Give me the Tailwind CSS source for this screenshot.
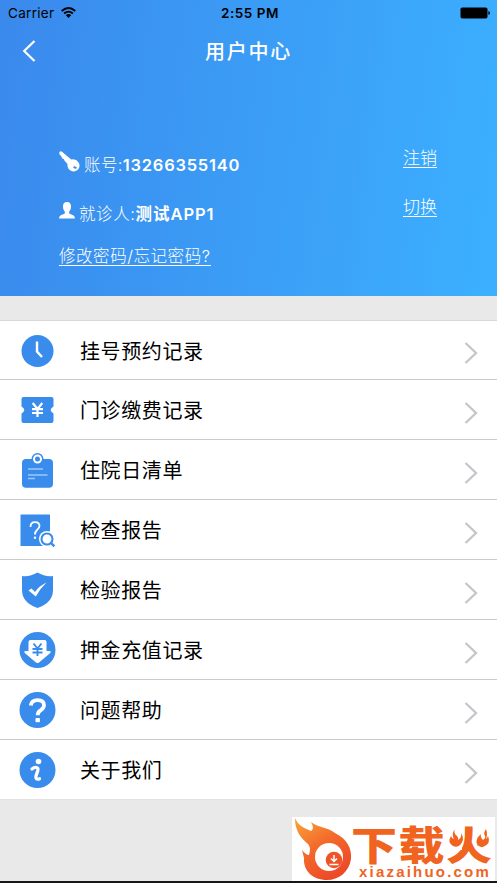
<!DOCTYPE html>
<html lang="zh-CN">
<head>
<meta charset="utf-8">
<meta name="viewport" content="width=device-width, initial-scale=1">
<title>用户中心</title>
<script src="https://cdn.jsdelivr.net/npm/@tailwindcss/browser@4"></script>
</head>
<body class="relative flex h-[883px] w-[497px] flex-col overflow-hidden bg-[#e9e9e9] font-['Inter','Noto_Sans_CJK_SC',sans-serif]">
<header class="h-[296px] shrink-0 bg-linear-[97deg] from-[#3a89ec] to-[#3cb0ff] text-white">
  <div class="grid h-[26px] grid-cols-3 items-center pr-[7px] pl-2 text-[13.5px] text-black">
    <div class="flex items-center gap-[6px]"><span class="w-[47px] tracking-[.3px] whitespace-nowrap">Carrier</span>
      <svg class="-mt-0.5 h-[11px] w-[15px]" viewBox="0 0 15 11" fill="none" stroke="#000" stroke-width="1.8"><path d="M.7 4Q7.5-2 14.3 4M3.1 6.5Q7.5 2.7 11.9 6.5"/><path d="M4.8 8.2Q7.5 6 10.2 8.2L7.5 11Z" fill="#000" stroke="none"/></svg>
    </div>
    <div class="pl-[2px] text-center font-semibold tracking-[.500px] whitespace-nowrap">2:55 PM</div>
    <div class="flex justify-end"><svg class="h-3 w-[30px]" viewBox="0 0 30 12"><rect x=".5" y=".5" width="27" height="11" rx="1.8"/><path d="M28.4 4Q30 4.5 30 6T28.4 8Z"/></svg></div>
  </div>
  <div class="grid h-[48px] grid-cols-[60px_1fr_60px] items-center">
    <svg class="mt-0.5 ml-[22px] h-[24px] w-[14px]" viewBox="0 0 14 24" fill="none" stroke="#fff" stroke-width="2.2"><path d="M12.5 2 2.2 12l10.300 10"/></svg>
    <h1 class="pt-[3px] text-center text-[20px] leading-none font-medium tracking-[1.800px]">用户中心</h1>
  </div>
  <div class="flex justify-between pt-[66px] pr-[60px] pl-[59px] text-[16.500px]">
    <div class="flex flex-col items-start whitespace-nowrap">
      <div class="flex h-[50px] items-center">
        <svg class="mr-1 -mt-2 h-[21px] w-[21px]" viewBox="0 0 21 21"><path d="M1 .5Q2-.2 3 .7L12.300 8.500Q17 7.500 19.400 11.200 22 15.500 18.800 18.700 15.500 21.800 11.500 19.600 8 17.500 8.500 13L5.400 9.500 4.700 7.900 3 7.300 2.600 5.700.5 3.300Q-.2 1.500 1 .5Z" fill="#fff"/><ellipse cx="16" cy="16.500" rx="1.800" ry="1.100" fill="#3b91ef" transform="rotate(15 16 16.500)"/></svg>
        <span class="font-light tracking-[.4px]">账号:</span><span class="font-semibold tracking-[.75px]">13266355140</span>
      </div>
      <div class="flex h-[48px] items-center">
        <svg class="mr-1 -mt-2 h-[17px] w-[16px]" viewBox="0 0 16 17" fill="#fff"><path d="M8 0C11 0 12.300 2 12 5.200 11.900 7 11 8.500 10.200 9.500V11.600L14.600 13.400Q15.900 14.200 16 16.400H0Q.1 14.200 1.400 13.400L5.800 11.600V9.500C5 8.500 4.100 7 4 5.200 3.700 2 5 0 8 0Z"/></svg>
        <span class="font-light tracking-[.6px]">就诊人:</span><span class="font-semibold tracking-[.95px]">测试APP1</span>
      </div>
      <a class="flex h-[38px] items-center font-light"><span class="border-b border-white leading-[17px] tracking-[.55px]">修改密码/忘记密码?</span></a>
    </div>
    <div class="flex flex-col font-light">
      <a class="flex h-[38px] items-center"><span class="border-b border-white text-[17px] leading-[17px]">注销</span></a>
      <a class="mt-[11px] flex h-[38px] items-center"><span class="border-b border-white text-[17px] leading-[17px]">切换</span></a>
    </div>
  </div>
</header>
<main class="mt-6 shrink-0 border-t border-[#d7d7d7] text-[20px] tracking-[.6px] text-black">
  <div class="flex h-[59px] items-center border-b border-[#cacaca] bg-white px-[19px]">
    <svg class="mt-px h-9 w-9" viewBox="0 0 36 36"><circle cx="18.500" cy="18" r="16" fill="#398cec"/><path d="M18 8.500V18.500L23 24" fill="none" stroke="#fff" stroke-width="2.400"/></svg>
    <span class="ml-[25px] flex-1 pt-[3px]">挂号预约记录</span>
    <svg class="mt-1.5 h-[22px] w-[14px]" viewBox="0 0 14 22" fill="none" stroke="#c5c5ca" stroke-width="2.300"><path d="M1.500 1 12 11 1.500 21"/></svg>
  </div>
  <div class="flex h-[60px] items-center border-b border-[#cacaca] bg-white px-[19px]">
    <svg class="h-9 w-9" viewBox="0 0 36 36"><path d="M4.500 5H32.500Q34.500 5 34.500 7V14.500Q28.800 18 34.500 21.500V29Q34.500 31 32.500 31H4.500Q2.500 31 2.500 29V21.500Q8.200 18 2.500 14.500V7Q2.500 5 4.500 5Z" fill="#398cec"/><path d="M13.700 11 18.500 17l4.800-6M18.500 17v8M13 17.200h11M13 21h11" fill="none" stroke="#fff" stroke-width="2.200"/></svg>
    <span class="ml-[25px] flex-1 pt-[2px]">门诊缴费记录</span>
    <svg class="mt-1.5 h-[22px] w-[14px]" viewBox="0 0 14 22" fill="none" stroke="#c5c5ca" stroke-width="2.300"><path d="M1.500 1 12 11 1.500 21"/></svg>
  </div>
  <div class="flex h-[60px] items-center border-b border-[#cacaca] bg-white px-[19px]">
    <svg class="h-9 w-9 overflow-visible" viewBox="0 0 36 36"><rect x="3" y="7" width="31" height="28.700" rx="4" fill="#398cec"/><circle cx="18.500" cy="7" r="6" fill="#398cec"/><circle cx="18.500" cy="7" r="3.500" fill="#398cec" stroke="#fff" stroke-width="2"/><path d="M9 17h15M9 23h19.500M9 26.500h7" stroke="#9dc7f7" stroke-width="1.300"/></svg>
    <span class="ml-[25px] flex-1 pt-[2px]">住院日清单</span>
    <svg class="mt-1.5 h-[22px] w-[14px]" viewBox="0 0 14 22" fill="none" stroke="#c5c5ca" stroke-width="2.300"><path d="M1.500 1 12 11 1.500 21"/></svg>
  </div>
  <div class="flex h-[60px] items-center border-b border-[#cacaca] bg-white px-[19px]">
    <svg class="h-9 w-9" viewBox="0 0 36 36" fill="none"><path d="M1.500 2.500h29.500v31.500H1.500Z" fill="#398cec"/><path d="M11.500 15Q11.500 10.200 16 10.200 20.500 10.200 20.500 14 20.500 16 18 18 16 19.800 16 22.500" stroke="#fff" stroke-width="1.800"/><circle cx="16" cy="25.700" r="1.200" fill="#fff"/><circle cx="28" cy="27" r="8" fill="#fff"/><circle cx="28" cy="27" r="5.500" stroke="#398cec" stroke-width="2.100"/><path d="m31.500 30.500 3.800 3.800" stroke="#398cec" stroke-width="2.400"/></svg>
    <span class="ml-[25px] flex-1 pt-[2px]">检查报告</span>
    <svg class="mt-1.5 h-[22px] w-[14px]" viewBox="0 0 14 22" fill="none" stroke="#c5c5ca" stroke-width="2.300"><path d="M1.500 1 12 11 1.500 21"/></svg>
  </div>
  <div class="flex h-[60px] items-center border-b border-[#cacaca] bg-white px-[19px]">
    <svg class="h-9 w-9" viewBox="0 0 36 36"><path d="M18.500.5Q26 5 34 4V18Q34 26 28 31 23.500 34.500 18.500 36 13.500 34.500 9 31 3 26 3 18V4Q11 5 18.500.500Z" fill="#398cec"/><path d="M9.500 18.500 12.500 16.500 16 20Q20 14 27.500 10.500 21 16.500 16.800 24.500Z" fill="#fff"/></svg>
    <span class="ml-[25px] flex-1 pt-[2px]">检验报告</span>
    <svg class="mt-1.5 h-[22px] w-[14px]" viewBox="0 0 14 22" fill="none" stroke="#c5c5ca" stroke-width="2.300"><path d="M1.500 1 12 11 1.500 21"/></svg>
  </div>
  <div class="flex h-[60px] items-center border-b border-[#cacaca] bg-white px-[19px]">
    <svg class="h-9 w-9 overflow-visible" viewBox="0 0 36 36"><circle cx="18.500" cy="18" r="18" fill="#398cec"/><path d="M11.500 8H25.500Q27.500 8 27.500 10V19H30.500Q32.500 19.500 31 21.200L20 30.500Q18.500 31.500 17 30.500L6 21.200Q4.500 19.500 6.500 19H9.500V10Q9.500 8 11.500 8Z" fill="#fff"/><path d="m14.500 11.500 4 5 4-5M18.500 16.500V24M13.500 17h10M13.500 20.500h10" fill="none" stroke="#398cec" stroke-width="1.900"/></svg>
    <span class="ml-[25px] flex-1 pt-[2px]">押金充值记录</span>
    <svg class="mt-1.5 h-[22px] w-[14px]" viewBox="0 0 14 22" fill="none" stroke="#c5c5ca" stroke-width="2.300"><path d="M1.500 1 12 11 1.500 21"/></svg>
  </div>
  <div class="flex h-[60px] items-center border-b border-[#cacaca] bg-white px-[19px]">
    <svg class="h-9 w-9 overflow-visible" viewBox="0 0 36 36"><circle cx="18.500" cy="18" r="18" fill="#398cec"/><path d="M11.800 13.500Q12.500 8.200 18.500 8.200 25 8.200 25 13.200 25 16 21.500 18.300 18.700 20 18.700 23.200" fill="none" stroke="#fff" stroke-width="3.800"/><rect x="16.500" y="26" width="4.400" height="4.200" rx=".8" fill="#fff"/></svg>
    <span class="ml-[25px] flex-1 pt-[2px]">问题帮助</span>
    <svg class="mt-1.5 h-[22px] w-[14px]" viewBox="0 0 14 22" fill="none" stroke="#c5c5ca" stroke-width="2.300"><path d="M1.500 1 12 11 1.500 21"/></svg>
  </div>
  <div class="flex h-[60px] items-center border-b border-[#e2e2e2] bg-white px-[19px]">
    <svg class="h-9 w-9 overflow-visible" viewBox="0 0 36 36"><circle cx="18.500" cy="18" r="18" fill="#398cec"/><circle cx="19.500" cy="9.500" r="2.800" fill="#fff"/><path d="M13 17Q15.500 15 17.500 15.500 19.500 16 18.800 18.500L17 24Q16 28 20.500 26.800" fill="none" stroke="#fff" stroke-width="3.300" stroke-linecap="round"/></svg>
    <span class="ml-[25px] flex-1 pt-[2px]">关于我们</span>
    <svg class="mt-1.5 h-[22px] w-[14px]" viewBox="0 0 14 22" fill="none" stroke="#c5c5ca" stroke-width="2.300"><path d="M1.500 1 12 11 1.500 21"/></svg>
  </div>
</main>
<div class="absolute top-[817px] left-[292px] flex h-[64px] w-[203px] overflow-hidden bg-white text-[#f0641f]">
  <svg class="h-[64px] w-[60px] shrink-0" viewBox="0 0 60 64"><defs><linearGradient id="flame" x1="0" y1="0" x2=".6" y2="1"><stop stop-color="#fba53b"/><stop offset=".5" stop-color="#f36b2b"/><stop offset="1" stop-color="#ed4928"/></linearGradient></defs><path d="M3 1C7 10 13 11 19 14 22 12 21 9 19 5 27 11 35 10 43 16 55 22 60 31 59 42 57 55 47 63 35 63 21 63 11 54 12 41L10 33Q14 38 17 38C18 34 19 31 16 27 12 23 3 17 3 1Z" fill="url(#flame)"/><circle cx="37" cy="40" r="14" fill="#fff"/><circle cx="42" cy="43" r="8.300" fill="#ef5428"/><path d="M42 38v6m-3-2.500 3 3 3-3M37.500 47.500h9" fill="none" stroke="#fff" stroke-width="1.500"/></svg>
  <div class="relative h-full flex-1">
    <div class="absolute top-[9px] left-[-1px] origin-top scale-y-[.86] text-[46px] leading-[46px] font-black tracking-[1.500px] whitespace-nowrap">下载火</div>
    <svg class="absolute top-[11px] left-[95px] h-[40px] w-[46px]" viewBox="0 0 46 40"><path d="M0 0H15V22H0ZM31 0H46V21H31Z" fill="#fff"/><path d="M8 1Q6 5 10 8 12 10 11 12 15 10 14 5 18 11 14 16 11 20 6 18 0 14 4 8 5 11 7 11 4 6 8 1ZM39 1Q36 5 38 8 39 10 36 12 33 9 34 6 28 11 30 16 33 21 38 18 44 15 41 8 40 11 39 11 41 6 39 1Z" fill="#f0641f"/></svg>
    <div class="absolute top-[47px] left-[7px] font-['Liberation_Sans',sans-serif] text-[15px] leading-[16px] font-bold tracking-[2.200px] whitespace-nowrap">xiazaihuo.com</div>
  </div>
</div>
<div class="absolute bottom-0 left-0 h-[2px] w-full bg-[#171717]"></div>
</body>
</html>
